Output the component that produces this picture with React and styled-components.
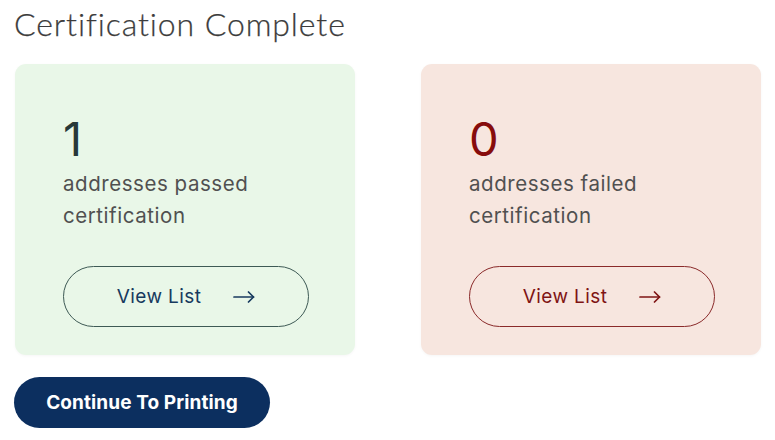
import React from "react";
import styled, { createGlobalStyle } from "styled-components";

const Global = createGlobalStyle`
  html, body { margin: 0; padding: 0; background: #ffffff; }
  body { font-family: Inter, "Noto Sans", sans-serif; }
`;

const Page = styled.div`
  padding: 4px 15px 0 14px;
  width: 775px;
  box-sizing: border-box;
`;

const Title = styled.h1`
  margin: 0;
  font-family: Lato, "Open Sans", sans-serif;
  font-weight: 300;
  font-size: 32px;
  line-height: 40px;
  color: #3c3c3c;
  letter-spacing: 0.9px;
  -webkit-text-stroke: 0.25px #3c3c3c;
`;

const Cards = styled.div`
  display: grid;
  grid-template-columns: 340px 340px;
  column-gap: 66px;
  margin-top: 20px;
  padding-left: 1px;
`;

const Card = styled.div`
  background: ${(p) => p.$bg};
  border-radius: 11px;
  height: 291px;
  box-sizing: border-box;
  padding: 50px 48px 0 48px;
  box-shadow: 0 1px 3px rgba(0, 0, 0, 0.04);
  display: flex;
  flex-direction: column;
`;

const Count = styled.div`
  font-family: Inter, sans-serif;
  font-size: 47px;
  line-height: 50px;
  font-weight: 400;
  color: ${(p) => p.$color};
`;

const Label = styled.div`
  margin-top: 4px;
  font-family: Inter, sans-serif;
  font-size: 20.5px;
  line-height: 32px;
  letter-spacing: 0.55px;
  color: #505050;
  width: 220px;
`;

const OutlineButton = styled.button`
  margin-top: 34px;
  width: 246px;
  height: 61px;
  border-radius: 31px;
  border: 1px solid ${(p) => p.$border};
  background: transparent;
  color: ${(p) => p.$color};
  display: flex;
  align-items: center;
  justify-content: center;
  gap: 32px;
  font-family: Inter, sans-serif;
  font-size: 19px;
  letter-spacing: 0.4px;
  padding: 0 0 0 0;
  cursor: pointer;
`;

const Arrow = styled.svg`
  width: 22px;
  height: 12px;
`;

const PrimaryButton = styled.button`
  margin-top: 22px;
  width: 256px;
  height: 51px;
  border: none;
  border-radius: 26px;
  background: #0c2f5f;
  color: #ffffff;
  font-family: Inter, Roboto, sans-serif;
  font-weight: 700;
  font-size: 19px;
  letter-spacing: 0.1px;
  cursor: pointer;
`;

const ArrowIcon = () => (
  <Arrow viewBox="0 0 22 12" fill="none" stroke="currentColor" strokeWidth="1.7" strokeLinecap="round" strokeLinejoin="round">
    <path d="M1 6H20.5" />
    <path d="M15.5 1L20.5 6L15.5 11" />
  </Arrow>
);

const StatCard = ({ bg, count, countColor, label, border, color }) => (
  <Card $bg={bg}>
    <Count $color={countColor}>{count}</Count>
    <Label>{label}</Label>
    <OutlineButton $border={border} $color={color}>
      View List
      <ArrowIcon />
    </OutlineButton>
  </Card>
);

export default function App() {
  return (
    <Page>
      <Global />
      <Title>Certification Complete</Title>
      <Cards>
        <StatCard
          bg="#e9f7e8"
          count="1"
          countColor="#273838"
          label="addresses passed certification"
          border="#3e5a55"
          color="#173a5e"
        />
        <StatCard
          bg="#f7e6df"
          count="0"
          countColor="#870c0c"
          label="addresses failed certification"
          border="#8a2a2a"
          color="#7f1414"
        />
      </Cards>
      <PrimaryButton>Continue To Printing</PrimaryButton>
    </Page>
  );
}
